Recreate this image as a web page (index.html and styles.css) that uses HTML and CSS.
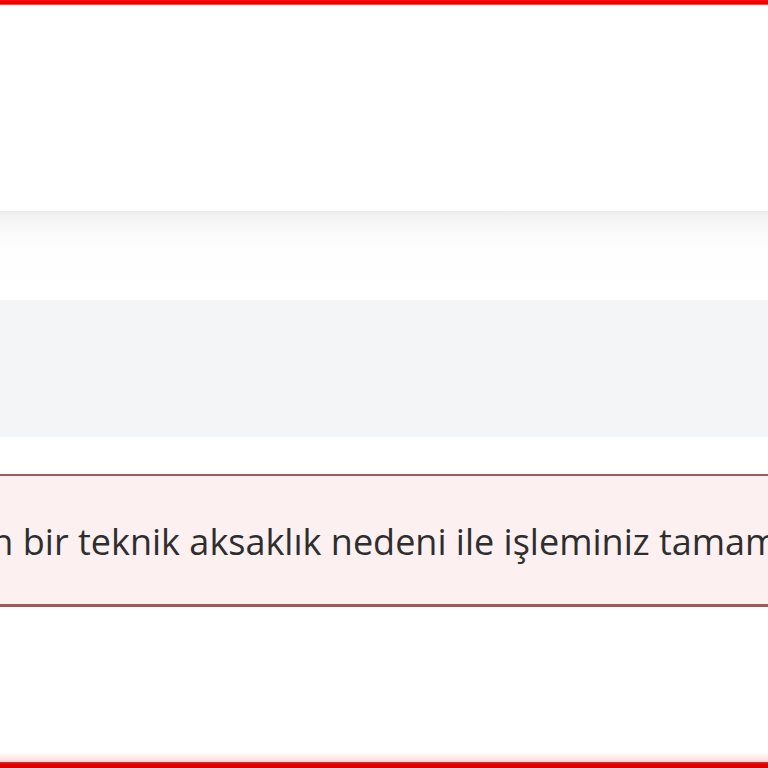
FILE: index.html
```html
<!DOCTYPE html>
<html lang="tr">
<head>
<meta charset="utf-8">
<title>Hata</title>
<link rel="stylesheet" href="styles.css">
</head>
<body>
<div class="page">
  <div class="top-bar"></div>
  <header class="header"></header>
  <div class="nav-shadow"></div>
  <div class="breadcrumb-band"></div>
  <div class="spacer"></div>
  <div class="alert">
    <p class="alert-text">Yaşanan bir teknik aksaklık nedeni ile işleminiz tamamlanamamıştır.</p>
  </div>
  <div class="filler"></div>
  <div class="bottom-bar"></div>
</div>
</body>
</html>
```
FILE: styles.css
```css
html, body {
  margin: 0;
  padding: 0;
  background: #ffffff;
  overflow: hidden;
}
.page {
  width: 768px;
  height: 768px;
  display: flex;
  flex-direction: column;
  overflow: hidden;
  font-family: "Open Sans", "Noto Sans", sans-serif;
}
.top-bar {
  height: 5px;
  flex: none;
  background: linear-gradient(#ff1010 0, #e80000 2px, #ff0000 4px, #ff8080 5px);
}
.header {
  height: 206px;
  flex: none;
  background: #fff;
}
.nav-shadow {
  height: 89px;
  flex: none;
  background: linear-gradient(#ebebeb 0, #f3f3f3 6px, #fafafa 20px, #fefefe 40px, #ffffff 89px);
}
.breadcrumb-band {
  height: 137px;
  flex: none;
  background: #f4f5f7;
}
.spacer {
  height: 37px;
  flex: none;
}
.alert {
  height: 133px;
  flex: none;
  box-sizing: border-box;
  border-top: 2px solid #a05a5c;
  border-bottom: 3px solid #a05a5c;
  background: #fcf0f1;
  display: flex;
  align-items: center;
  white-space: nowrap;
  overflow: hidden;
}
.alert-text {
  margin: 0 0 0 -128px;
  font-size: 36px;
  color: #2e2e2e;
  letter-spacing: 0;
  line-height: 1;
  padding-top: 4px;
}
.filler {
  flex: 1;
  background: linear-gradient(#ffffff 0, #ffffff calc(100% - 10px), #ffd8d8 100%);
}
.bottom-bar {
  height: 6px;
  flex: none;
  background: linear-gradient(#ee3030 0, #dd0000 2px, #dd0000 100%);
}
```
